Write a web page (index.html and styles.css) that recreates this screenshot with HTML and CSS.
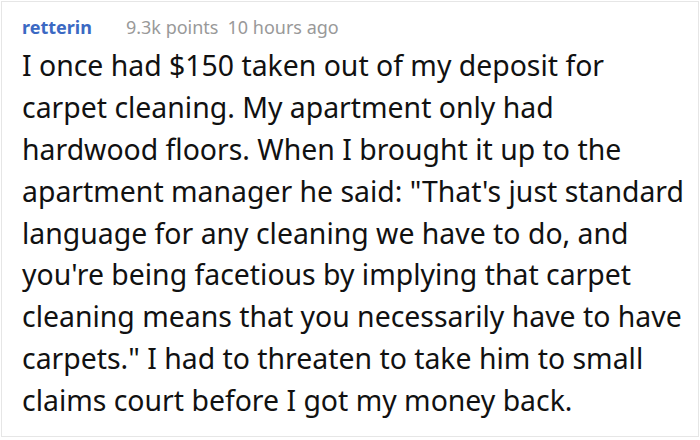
FILE: index.html
```html
<!DOCTYPE html>
<html>
<head>
<meta charset="utf-8">
<link rel="stylesheet" href="styles.css">
</head>
<body>
<div class="card">
  <div class="meta">
    <span class="author">retterin</span>
    <span class="points">9.3k points</span>
    <span class="time">10 hours ago</span>
  </div>
  <p class="text">I once had $150 taken out of my deposit for<br>carpet cleaning. My apartment only had<br>hardwood floors. When I brought it up to the<br>apartment manager he said: "That's just standard<br>language for any cleaning we have to do, and<br>you're being facetious by implying that carpet<br>cleaning means that you necessarily have to have<br>carpets." I had to threaten to take him to small<br>claims court before I got my money back.</p>
</div>
</body>
</html>
```
FILE: styles.css
```css
html, body {
  margin: 0;
  padding: 0;
  background: #fff;
}
body {
  font-family: "Noto Sans", "Open Sans", sans-serif;
  width: 700px;
  height: 440px;
  overflow: hidden;
}
.card {
  box-sizing: border-box;
  margin: 1px 0 0 1px;
  width: 698px;
  height: 436px;
  border: 1px solid #e6e6e6;
  padding: 13px 20px 0 20px;
}
.meta {
  display: flex;
  align-items: baseline;
  font-size: 18px;
  line-height: 24px;
}
.author {
  color: #3b69c3;
  font-weight: 700;
}
.points {
  color: #999;
  margin-left: 34px;
}
.time {
  color: #999;
  margin-left: 9px;
}
.text {
  margin: 6.4px 0 0 0;
  font-size: 28.4px;
  line-height: 41.8px;
  color: #111;
  white-space: nowrap;
}
```
